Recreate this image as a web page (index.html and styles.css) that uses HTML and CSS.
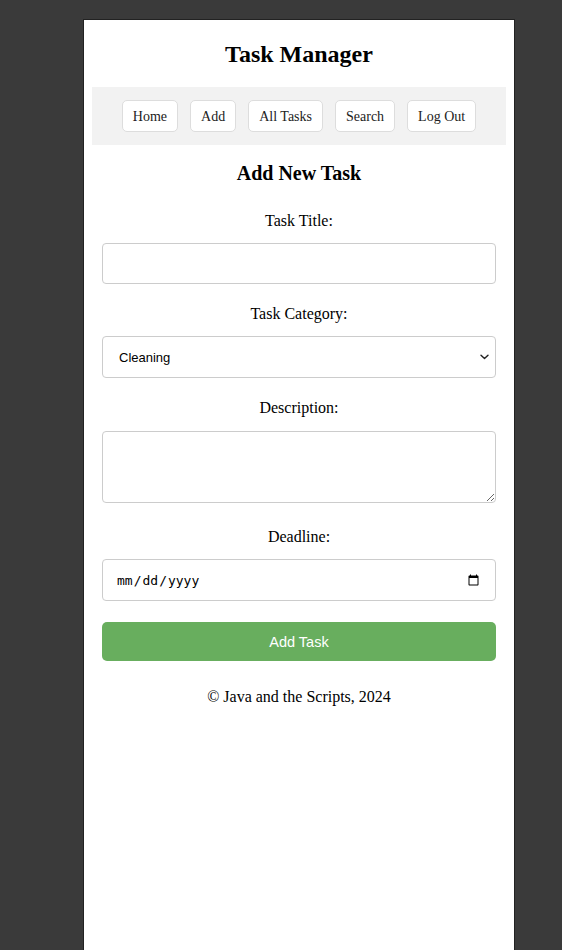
FILE: index.html
```html
<!DOCTYPE html>
<html lang="en">
<head>
<meta charset="utf-8">
<title>Task Manager</title>
<link rel="stylesheet" href="styles.css">
</head>
<body>
<div class="page">
  <h1 class="title">Task Manager</h1>
  <nav class="nav">
    <a class="nav-btn" href="#">Home</a>
    <a class="nav-btn" href="#">Add</a>
    <a class="nav-btn" href="#">All Tasks</a>
    <a class="nav-btn" href="#">Search</a>
    <a class="nav-btn" href="#">Log Out</a>
  </nav>
  <form class="form">
    <h2 class="form-title">Add New Task</h2>
    <label class="label" for="title">Task Title:</label>
    <input class="control" type="text" id="title">
    <label class="label" for="cat">Task Category:</label>
    <div class="select-wrap">
      <select class="control select" id="cat">
        <option>Cleaning</option>
        <option>Shopping</option>
        <option>Work</option>
      </select>
      <svg class="chevron" width="9" height="6" viewBox="0 0 9 6" aria-hidden="true"><path d="M1 1.2 L4.5 4.6 L8 1.2" fill="none" stroke="#222" stroke-width="1.4" stroke-linecap="round" stroke-linejoin="round"/></svg>
    </div>
    <label class="label" for="desc">Description:</label>
    <textarea class="control textarea" id="desc"></textarea>
    <label class="label" for="dl">Deadline:</label>
    <input class="control date" type="date" id="dl">
    <button class="submit" type="button">Add Task</button>
  </form>
  <p class="footer">© Java and the Scripts, 2024</p>
</div>
</body>
</html>
```

FILE: styles.css
```css
html, body {
  margin: 0;
  padding: 0;
  background: #3a3a3a;
}
body {
  padding-top: 19px;
  font-family: "Liberation Serif", "Times New Roman", serif;
  color: #000;
}
.page {
  box-sizing: border-box;
  width: 432px;
  margin-left: 83px;
  min-height: 960px;
  background: #fff;
  border: 1px solid #222;
  padding: 0 8px;
}
.title {
  margin: 20px 0 19px;
  font-size: 24px;
  line-height: 28px;
  font-weight: bold;
  text-align: center;
}
.nav {
  background: #f2f2f2;
  display: flex;
  justify-content: center;
  gap: 12px;
  padding: 13px 0;
}
.nav-btn {
  display: block;
  padding: 8px 10px 6px;
  line-height: 16px;
  font-size: 14px;
  color: #222;
  text-decoration: none;
  background: #fff;
  border: 1px solid #ddd;
  border-radius: 5px;
}
.form {
  display: flex;
  flex-direction: column;
  padding: 0 10px;
}
.form-title {
  margin: 16px 0 26px;
  font-size: 20px;
  line-height: 24px;
  text-align: center;
}
.label {
  display: block;
  text-align: center;
  font-size: 16px;
  line-height: 20px;
  margin-bottom: 12px;
}
.control {
  box-sizing: border-box;
  width: 100%;
  margin: 0 0 20px;
  border: 1px solid #ccc;
  border-radius: 4px;
  background: #fff;
  font-family: "Liberation Sans", Arial, sans-serif;
  font-size: 13px;
  color: #000;
}
input.control {
  height: 41px;
  padding: 0 12px;
}
.select-wrap {
  position: relative;
}
.select {
  display: block;
  height: 42px;
  padding: 0 12px 0 16px;
  appearance: none;
  -webkit-appearance: none;
}
.chevron {
  position: absolute;
  right: 7px;
  top: 18px;
}
.textarea {
  height: 72px;
  padding: 8px 12px;
  margin-top: 1px;
  margin-bottom: 24px;
  resize: vertical;
}
input.date {
  height: 42px;
  font-family: "DejaVu Sans Mono", Menlo, monospace;
  font-size: 13px;
  padding: 0 13px;
  margin-bottom: 21px;
}
.submit {
  height: 39px;
  border: none;
  border-radius: 5px;
  background: #68ae5e;
  color: #fff;
  font-family: "Liberation Sans", Arial, sans-serif;
  font-size: 14.5px;
  cursor: pointer;
}
.footer {
  margin: 26px 0 0;
  text-align: center;
  font-size: 16px;
  line-height: 20px;
}
```
